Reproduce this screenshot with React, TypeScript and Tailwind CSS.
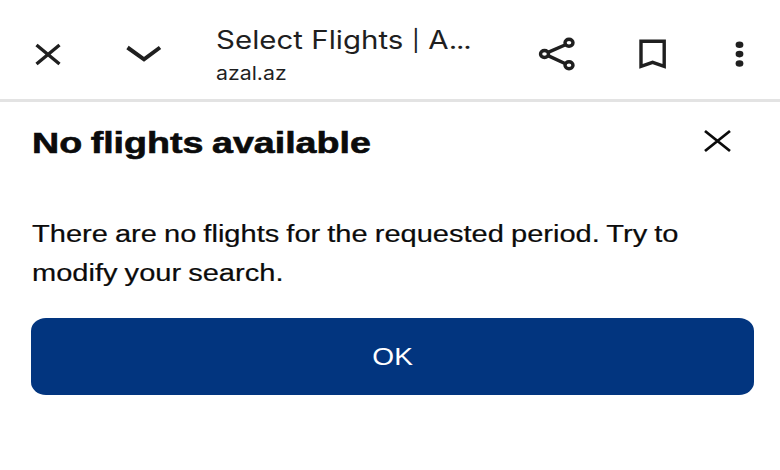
function BrowserBar() {
  return (
    <header className="flex h-[102px] items-start border-b-[3px] border-[#e3e3e3] text-[#1f1f1f]">
      <button aria-label="Close" className="ml-[34px] mt-[42px]">
        <svg width="28" height="25" viewBox="0 0 28 25" fill="none" stroke="currentColor" strokeWidth="3.4">
          <path d="M2.5 3 25.5 22M25.5 3 2.5 22" />
        </svg>
      </button>

      <button aria-label="Collapse" className="ml-[63px] mt-[43px]">
        <svg width="38" height="22" viewBox="0 0 38 22" fill="none" stroke="currentColor" strokeWidth="4">
          <path d="M2.5 4.5 19 16.3 35 4.5" />
        </svg>
      </button>

      <div className="ml-[53px] mt-[24px] w-[270px] whitespace-nowrap">
        <p className="origin-left scale-x-[1.18] text-[25px] leading-8">
          Select Flights <span className="relative -top-px text-[21px]">|</span> A
          <span className="tracking-[-1px]">...</span>
        </p>
        <p className="mt-[2px] origin-left scale-x-[1.12] text-[19px] leading-7">azal.az</p>
      </div>

      <button aria-label="Share" className="ml-[51px] mt-[35px]">
        <svg width="42" height="38" viewBox="0 0 42 38" fill="none" stroke="currentColor" strokeWidth="3.4">
          <ellipse cx="7.5" cy="19" rx="4" ry="3.5" />
          <ellipse cx="32" cy="7.8" rx="4" ry="3.5" />
          <ellipse cx="32" cy="30.3" rx="4" ry="3.5" />
          <path d="M11 17.4 28.5 9.7M11 20.6 28.5 28.7" />
        </svg>
      </button>

      <button aria-label="Bookmark" className="ml-[58px] mt-[38px]">
        <svg width="30" height="32" viewBox="0 0 30 32" fill="none" stroke="currentColor" strokeWidth="3.4">
          <path d="M4 28.4V3.2H27.2V28.4L15.6 24.4Z" />
        </svg>
      </button>

      <button aria-label="More" className="ml-[68px] mt-[40px]">
        <svg width="10" height="28" viewBox="0 0 10 28" fill="currentColor">
          <ellipse cx="4.5" cy="4.8" rx="3.9" ry="3.3" />
          <ellipse cx="4.5" cy="14.1" rx="3.9" ry="3.3" />
          <ellipse cx="4.5" cy="23.5" rx="3.9" ry="3.3" />
        </svg>
      </button>
    </header>
  )
}

export default function App() {
  return (
    <div className="h-[470px] w-[780px] overflow-hidden bg-white font-['Inter',sans-serif] text-[#0b0b0b]">
      <BrowserBar />

      <main className="pl-8 pr-[26px] font-['Liberation_Sans',sans-serif]">
        <div className="flex h-20 items-start justify-between pt-[21px]">
          <h1 className="origin-left scale-x-[1.297] whitespace-nowrap text-[29px] font-bold leading-10 [-webkit-text-stroke:0.6px_#0b0b0b] [word-spacing:-1.5px]">
            No flights available
          </h1>
          <button aria-label="Dismiss" className="mr-[21px] mt-[5px]">
            <svg width="31" height="26" viewBox="0 0 31 26" fill="none" stroke="currentColor" strokeWidth="2.8">
              <path d="M3 3 28 23M28 3 3 23" />
            </svg>
          </button>
        </div>

        <p className="mt-[33px] origin-left scale-x-[1.263] whitespace-nowrap text-[23px] leading-[38.5px] [-webkit-text-stroke:0.2px_#0b0b0b] [word-spacing:-0.8px]">
          There are no flights for the requested period. Try to
          <br />
          modify your search.
        </p>

        <button className="-ml-px mt-[26px] flex h-[77px] w-[723px] items-center justify-center rounded-[15px/13px] bg-[#02357f] text-white">
          <span className="scale-x-[1.22] pt-px text-[23px]">OK</span>
        </button>
      </main>
    </div>
  )
}
